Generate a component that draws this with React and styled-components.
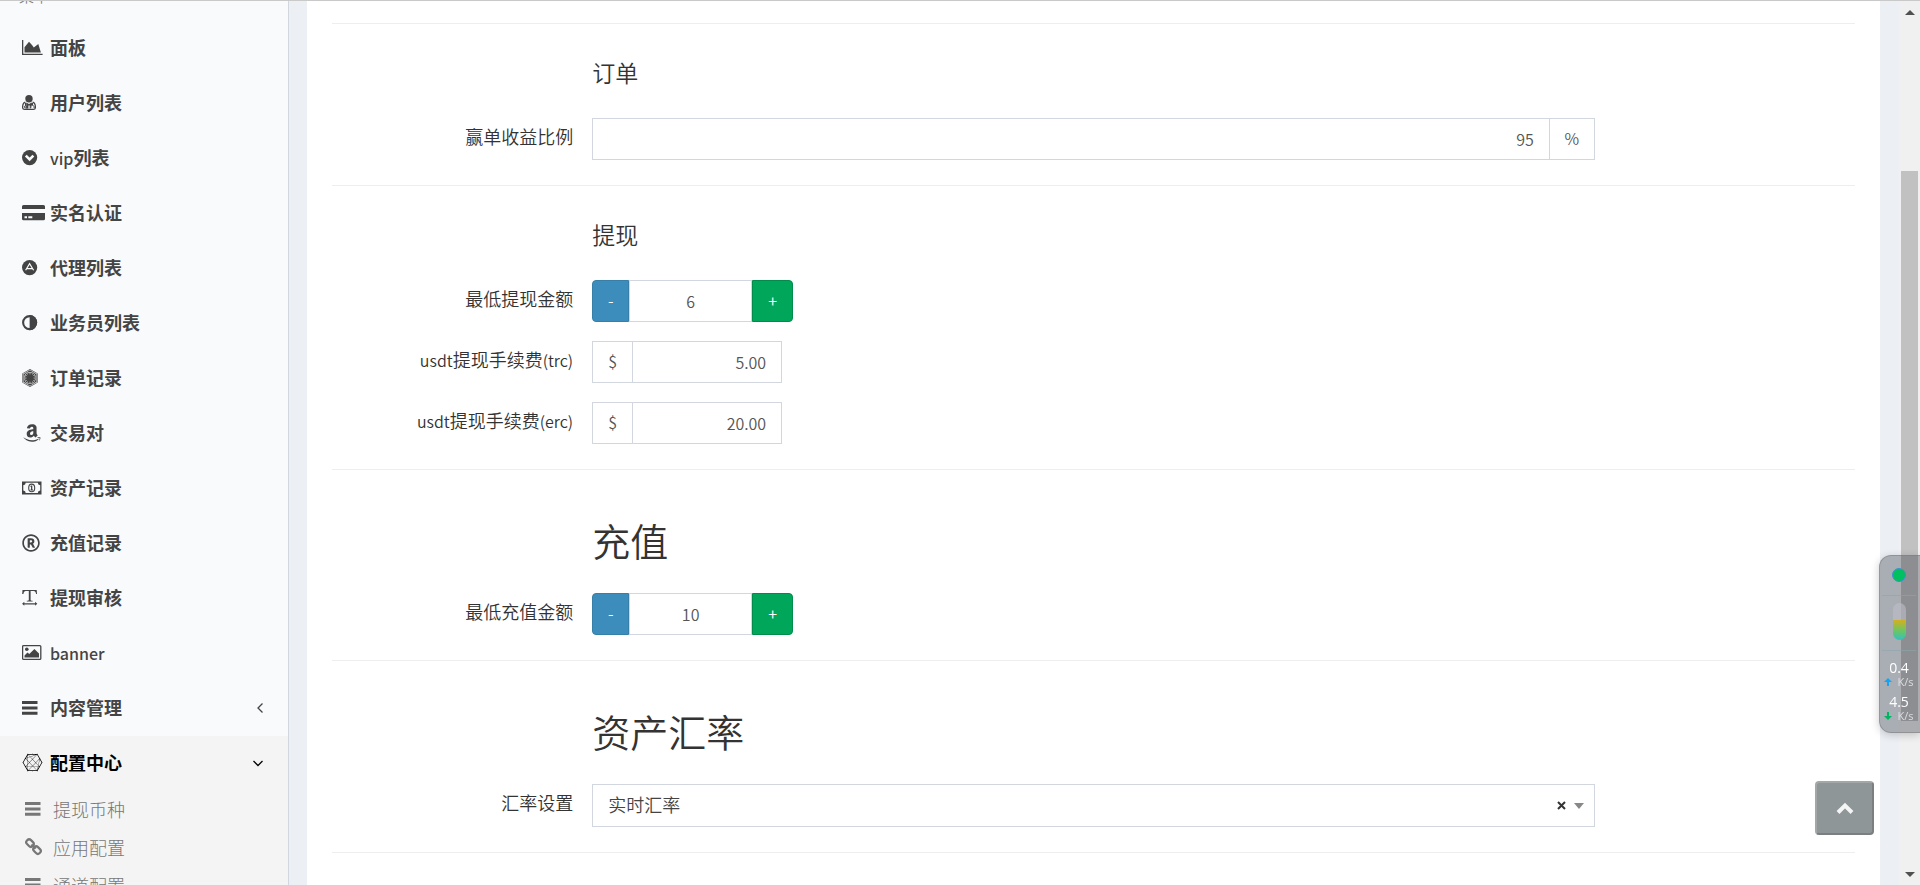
import React, { useState } from "react";
import styled, { createGlobalStyle } from "styled-components";
import {
  FaAmazon,
  FaConnectdevelop,
  FaFirstOrder,
  FaRegRegistered,
} from "react-icons/fa";

const GlobalStyle = createGlobalStyle`
  * {
    box-sizing: border-box;
  }

  body {
    margin: 0;
    color: #333;
    font-family: "Noto Sans CJK SC", sans-serif;
    font-size: 18px;
    font-weight: 350;
    overflow: hidden;
  }

  button,
  input,
  select {
    font-family: inherit;
    font-weight: inherit;
  }
`;

const Page = styled.div`
  display: flex;
  height: 100vh;
  border-top: 1px solid #c9c9c9;
  background-color: #ecf0f5;
`;

const Sidebar = styled.nav`
  flex: 0 0 289px;
  overflow: hidden;
  border-right: 1px solid #d2d6de;
  background-color: #f9fafc;
`;

const SidebarHeader = styled.div`
  height: 42px;
  margin-top: -22px;
  padding: 6px 19px 0;
  color: #848484;
  font-size: 15px;
  line-height: 22px;
`;

const MenuList = styled.ul`
  margin: 0;
  padding: 0;
  list-style: none;
`;

const MenuLink = styled.a`
  display: flex;
  align-items: center;
  height: 55px;
  padding: 0 24px 2px 22px;
  background-color: ${(props) => (props.$active ? "#f4f4f4" : "transparent")};
  color: ${(props) => (props.$active ? "#000" : "#444")};
  font-weight: 600;
  text-decoration: none;
`;

const SubMenu = styled(MenuList)`
  background-color: #f4f4f4;
`;

const SubLink = styled.a`
  display: flex;
  align-items: center;
  height: 38px;
  padding: 0 0 3px 25px;
  color: #777;
  font-weight: 300;
  text-decoration: none;
`;

const IconSlot = styled.span`
  display: flex;
  align-items: center;
  flex: 0 0 28px;

  svg {
    flex: none;
  }
`;

const MenuText = styled.span`
  flex: 1;
  padding-bottom: 2px;
`;

const Latin = styled.span`
  font-size: 16px;
`;

const MenuLatin = styled(Latin)`
  font-weight: 500;
`;

const Content = styled.main`
  flex: 1;
  min-width: 0;
  padding: 0 19px 0 18px;
`;

const Box = styled.form`
  min-height: 100%;
  padding: 22px 6px 0;
  background-color: #fff;
`;

const Divider = styled.hr`
  height: 1px;
  margin: 0 19px;
  border: 0;
  background-color: #eee;
`;

const Section = styled.section`
  display: flex;
  flex-direction: column;
  gap: 19px;
  padding-bottom: 25px;
`;

const Row = styled.div`
  display: grid;
  grid-template-columns: 2fr 8fr 2fr;
`;

const Heading = styled.h4`
  grid-column: 2;
  height: ${(props) => (props.$large ? "104px" : "75px")};
  margin: 0;
  padding: ${(props) => (props.$large ? "45px 19px 0" : "32px 19px 0")};
  font-size: ${(props) => (props.$large ? "38px" : "23px")};
  font-weight: 350;
  line-height: ${(props) => (props.$large ? "50px" : "32px")};
`;

const Label = styled.label`
  padding-top: 6px;
  line-height: 25px;
  text-align: right;
  white-space: nowrap;
`;

const Field = styled.div`
  display: flex;
  padding: 0 19px;
`;

const Group = styled.div`
  display: flex;
  width: ${(props) => props.$width || "100%"};
  height: 42px;
`;

const Input = styled.input`
  flex: 1;
  min-width: 0;
  padding: 0 15px;
  border: 1px solid #d2d6de;
  border-radius: 0;
  outline: none;
  color: #555;
  font-size: 16px;
  text-align: ${(props) => props.$align || "right"};
`;

const Addon = styled.span`
  display: flex;
  align-items: center;
  justify-content: center;
  width: ${(props) => (props.$end ? "45px" : "40px")};
  padding-bottom: 2px;
  border: 1px solid #d2d6de;
  border-${(props) => (props.$end ? "left" : "right")}: 0;
  color: #555;
  font-size: 16px;
`;

const StepButton = styled.button`
  width: ${(props) => (props.$plus ? "41px" : "37px")};
  padding: 0 0 2px;
  border: 1px solid ${(props) => (props.$plus ? "#008d4c" : "#367fa9")};
  border-radius: ${(props) => (props.$plus ? "0 4px 4px 0" : "4px 0 0 4px")};
  background-color: ${(props) => (props.$plus ? "#00a65a" : "#3c8dbc")};
  color: #fff;
  font-size: 16px;
  cursor: pointer;
`;

const SelectBox = styled.div`
  display: flex;
  align-items: center;
  width: 100%;
  height: 43px;
  padding-right: 10px;
  border: 1px solid #d2d6de;
`;

const Select = styled.select`
  flex: 1;
  height: 100%;
  padding: 0 15px 3px;
  border: 0;
  outline: none;
  appearance: none;
  background: transparent;
  color: #444;
  font-size: 18px;
`;

const ClearButton = styled.button`
  display: flex;
  padding: 0;
  border: 0;
  background: none;
  color: #333;
  cursor: pointer;
`;

const Caret = styled.span`
  margin-left: 8px;
  border: 5px solid transparent;
  border-top: 6px solid #888;
  border-bottom: 0;
`;

const Scrollbar = styled.div`
  display: flex;
  flex: 0 0 21px;
  flex-direction: column;
  align-items: center;
  padding: 9px 0 8px;
  background-color: #f0f0f0;
`;

const ScrollArrow = styled.span`
  border: 5px solid transparent;
  border-${(props) => (props.$down ? "top" : "bottom")}-color: #505050;
  border-${(props) => (props.$down ? "bottom" : "top")}: 0;
`;

const ScrollGap = styled.span`
  flex: ${(props) => props.$size};
`;

const ScrollThumb = styled.span`
  flex: 549;
  width: 17px;
  background-color: #c1c1c1;
`;

const TopButton = styled.button`
  position: fixed;
  right: 46px;
  bottom: 50px;
  display: flex;
  align-items: center;
  justify-content: center;
  width: 59px;
  height: 54px;
  border: 2px solid;
  border-color: #a3a7a7 #7c7f7f #7c7f7f #a3a7a7;
  border-radius: 4px;
  background-color: #8f9697;
  cursor: pointer;
`;

const Monitor = styled.aside`
  position: fixed;
  right: 0;
  bottom: 152px;
  display: flex;
  flex-direction: column;
  align-items: center;
  width: 41px;
  height: 178px;
  padding: 12px 2px 0 0;
  border: 1px solid rgba(120, 120, 125, 0.5);
  border-right: 0;
  border-radius: 12px 0 0 12px;
  background-color: rgba(42, 43, 56, 0.34);
  box-shadow: 0 2px 8px rgba(0, 0, 0, 0.2);
  color: #fff;
  font-family: "Open Sans", sans-serif;
  font-weight: 400;
`;

const StatusDot = styled.span`
  width: 14px;
  height: 14px;
  border: 1px solid #3f8fd0;
  border-radius: 50%;
  background-color: #00c060;
`;

const MonitorLine = styled.span`
  width: 34px;
  height: 1px;
  margin: ${(props) => (props.$last ? "10px 0 9px" : "13px 0 7px")};
  background-color: rgba(140, 165, 175, 0.6);
`;

const Gauge = styled.span`
  width: 13px;
  height: 37px;
  border-radius: 7px;
  background: linear-gradient(
    rgba(190, 190, 200, 0.6) 0 17px,
    #d3b020 17px,
    #68c765 28px,
    #38bfc0
  );
`;

const Speed = styled.span`
  height: 34px;
  text-align: center;
`;

const SpeedValue = styled.span`
  display: block;
  font-size: 14px;
  line-height: 16px;
`;

const SpeedUnit = styled.span`
  display: flex;
  align-items: center;
  gap: 5px;
  color: #dcdde0;
  font-size: 11px;
  line-height: 11px;
`;

function Icon({ width, children }) {
  return (
    <svg
      width={width}
      height="18"
      viewBox={`0 0 ${width} 18`}
      fill="currentColor"
      aria-hidden="true"
    >
      {children}
    </svg>
  );
}

const icons = {
  chart: (
    <Icon width={21}>
      <path d="M0 1h1.3v13.7H20.6V16H0zM2.5 13.5V8.2L7 2.8l3.2 3.4 1.6 2.2L16.3 5l2.6 8.5z" />
    </Icon>
  ),
  doctor: (
    <Icon width={14}>
      <circle cx="7" cy="4.7" r="3.7" />
      <path
        d="M3.4 8.2C1.4 8.8.6 10.6.6 13.4c0 1.4.8 2 2 2h8.8c1.2 0 2-.6 2-2 0-2.8-.8-4.6-2.8-5.2"
        fill="none"
        stroke="currentColor"
        strokeWidth="1.3"
      />
      <path d="M4.2 8.6 7 10l2.8-1.4.3 2.3c-1.3.3-1.5 1.2-1.5 3.6H7.7v-3H6.4v3l-2.2.3v-3z" />
      <path
        d="M3.5 9v2.8M10.5 9v2M8.8 14v-1.3a1.7 1.7 0 0 1 3.3 0V14"
        fill="none"
        stroke="currentColor"
        strokeWidth="1"
      />
      <circle cx="3.4" cy="12.9" r="1" fill="none" stroke="currentColor" />
    </Icon>
  ),
  circleDown: (
    <Icon width={16}>
      <circle cx="7.6" cy="8.6" r="7.6" />
      <path d="m3.8 6.7 3.8 3.8 3.8-3.8" fill="none" stroke="#f9fafc" strokeWidth="2.6" />
    </Icon>
  ),
  card: (
    <Icon width={23}>
      <path d="M1.500 1h20A1.500 1.500 0 0 1 23 2.500V5H0V2.500A1.500 1.500 0 0 1 1.500 1z" />
      <path
        fillRule="evenodd"
        d="M0 9h23v5.8a1.500 1.500 0 0 1-1.500 1.500h-20A1.500 1.500 0 0 1 0 14.800zm2.500 3.300v1.900H5v-1.900zm3.800 0v1.900h4v-1.900z"
      />
    </Icon>
  ),
  agent: (
    <Icon width={16}>
      <circle cx="7.6" cy="8.6" r="7.6" />
      <path
        d="M3.6 11.2 7.6 4.6l4 6.6M4.8 9.7h5.6"
        fill="none"
        stroke="#f9fafc"
        strokeWidth="1.2"
      />
    </Icon>
  ),
  adjust: (
    <Icon width={16}>
      <circle cx="7.6" cy="8.6" r="6.5" fill="none" stroke="currentColor" strokeWidth="2.1" />
      <path d="M7.6 1a7.6 7.6 0 0 1 0 15.2z" />
    </Icon>
  ),
  order: <FaFirstOrder style={{ width: 16, height: 18 }} />,
  amazon: <FaAmazon size={20} />,
  money: (
    <Icon width={20}>
      <path
        fillRule="evenodd"
        d="M0 2.4h19.5v13H0zm3.7 1.3A2.5 2.5 0 0 1 1.3 6.2v5.4a2.5 2.5 0 0 1 2.4 2.5h12.1a2.5 2.5 0 0 1 2.4-2.5V6.2a2.5 2.5 0 0 1-2.4-2.5z"
      />
      <ellipse cx="9.7" cy="8.9" rx="3" ry="3.8" fill="none" stroke="currentColor" strokeWidth="1.1" />
      <path d="M9 6.6h1.3v4h.8v.8H8.4v-.8H9V7.8l-.6.3v-.9z" />
    </Icon>
  ),
  registered: <FaRegRegistered size={18} />,
  textWidth: (
    <Icon width={16}>
      <path d="M.5 1h14.2l.3 4h-.9c-.5-2.2-.9-2.9-2.4-2.9H8.6v8.6c0 .8.5 1 2 1.1v.8H4.8v-.8c1.5-.1 2-.3 2-1.1V2.1h-3c-1.5 0-1.9.7-2.4 2.9H.2z" />
      <path d="M2.3 14.2h10.8v-1.4l2.2 2-2.2 2v-1.3H2.3v1.3l-2.2-2 2.2-2z" />
    </Icon>
  ),
  picture: (
    <Icon width={20}>
      <rect x=".6" y="1.6" width="18.2" height="13.8" rx="1" fill="none" stroke="currentColor" strokeWidth="1.3" />
      <circle cx="4.8" cy="5.3" r="1.8" />
      <path d="M2.5 13.5v-2l3-3 1.8 1.6L12.4 5l4.6 4.6v3.9z" />
    </Icon>
  ),
  bars: (
    <Icon width={16}>
      <path d="M0 2h15.500v3H0zM0 7.400h15.500v3H0zM0 12.700h15.500v3H0z" />
    </Icon>
  ),
  mesh: <FaConnectdevelop size={21} />,
  link: (
    <Icon width={17}>
      <g fill="none" stroke="currentColor" strokeWidth="2.2">
        <rect x="1" y="2.3" width="8" height="5.6" rx="2.6" transform="rotate(45 5 5.1)" />
        <rect x="8" y="9.3" width="8" height="5.6" rx="2.6" transform="rotate(45 12 12.1)" />
        <path d="m6.4 6.5 4.2 4.2" />
      </g>
    </Icon>
  ),
};

const menu = [
  { icon: "chart", text: "面板" },
  { icon: "doctor", text: "用户列表" },
  { icon: "circleDown", latin: "vip", text: "列表" },
  { icon: "card", text: "实名认证" },
  { icon: "agent", text: "代理列表" },
  { icon: "adjust", text: "业务员列表" },
  { icon: "order", text: "订单记录" },
  { icon: "amazon", text: "交易对" },
  { icon: "money", text: "资产记录" },
  { icon: "registered", text: "充值记录" },
  { icon: "textWidth", text: "提现审核" },
  { icon: "picture", latin: "banner", text: "" },
  { icon: "bars", text: "内容管理", arrow: "left" },
  { icon: "mesh", text: "配置中心", arrow: "down", active: true },
];

const subMenu = [
  { icon: "bars", text: "提现币种" },
  { icon: "link", text: "应用配置" },
  { icon: "bars", text: "通道配置" },
];

function Angle({ direction }) {
  return (
    <svg width="12" height="12" viewBox="0 0 12 12" fill="none" stroke="currentColor" strokeWidth="1.3">
      <path d={direction === "down" ? "M1.500 4 6 8.500 10.500 4" : "M10.500 1.500 6 6l4.500 4.500"} />
    </svg>
  );
}

function FormRow({ id, latin, label, suffix, children }) {
  return (
    <Row>
      <Label htmlFor={id}>
        {latin && <Latin>{latin}</Latin>}
        {label}
        {suffix && <Latin>{suffix}</Latin>}
      </Label>
      <Field>{children}</Field>
    </Row>
  );
}

function SectionHeading({ large, children }) {
  return (
    <Row>
      <Heading as={large ? "h2" : "h4"} $large={large}>
        {children}
      </Heading>
    </Row>
  );
}

function NumberStepper({ id, initial }) {
  const [value, setValue] = useState(initial);

  return (
    <Group $width="201px">
      <StepButton type="button" onClick={() => setValue(Number(value) - 1)}>
        -
      </StepButton>
      <Input
        id={id}
        type="text"
        $align="center"
        value={value}
        onChange={(e) => setValue(e.target.value)}
      />
      <StepButton type="button" $plus onClick={() => setValue(Number(value) + 1)}>
        +
      </StepButton>
    </Group>
  );
}

function SpeedRow({ value, color, down }) {
  return (
    <Speed>
      <SpeedValue>{value}</SpeedValue>
      <SpeedUnit>
        <svg width="8" height="10" viewBox="0 0 8 10" fill={color}>
          <path d={down ? "M3 1h2v4h3L4 9 0 5h3z" : "M3 9h2V5h3L4 1 0 5h3z"} />
        </svg>
        K/s
      </SpeedUnit>
    </Speed>
  );
}

function App() {
  const [rate, setRate] = useState("realtime");

  return (
    <>
      <GlobalStyle />
      <Page>
        <Sidebar>
          <SidebarHeader>菜单</SidebarHeader>
          <MenuList>
            {menu.map((item) => (
              <li key={item.icon}>
                <MenuLink href="#" $active={item.active}>
                  <IconSlot>{icons[item.icon]}</IconSlot>
                  <MenuText>
                    {item.latin && <MenuLatin>{item.latin}</MenuLatin>}
                    {item.text}
                  </MenuText>
                  {item.arrow && <Angle direction={item.arrow} />}
                </MenuLink>
              </li>
            ))}
          </MenuList>
          <SubMenu>
            {subMenu.map((item) => (
              <li key={item.text}>
                <SubLink href="#">
                  <IconSlot>{icons[item.icon]}</IconSlot>
                  {item.text}
                </SubLink>
              </li>
            ))}
          </SubMenu>
        </Sidebar>

        <Content>
          <Box>
            <Divider />
            <Section>
              <SectionHeading>订单</SectionHeading>
              <FormRow id="profit" label="赢单收益比例">
                <Group>
                  <Input id="profit" type="text" defaultValue="95" />
                  <Addon $end>%</Addon>
                </Group>
              </FormRow>
            </Section>
            <Divider />
            <Section>
              <SectionHeading>提现</SectionHeading>
              <FormRow id="min-withdraw" label="最低提现金额">
                <NumberStepper id="min-withdraw" initial="6" />
              </FormRow>
              <FormRow id="fee-trc" latin="usdt" label="提现手续费" suffix="(trc)">
                <Group $width="190px">
                  <Addon>$</Addon>
                  <Input id="fee-trc" type="text" defaultValue="5.00" />
                </Group>
              </FormRow>
              <FormRow id="fee-erc" latin="usdt" label="提现手续费" suffix="(erc)">
                <Group $width="190px">
                  <Addon>$</Addon>
                  <Input id="fee-erc" type="text" defaultValue="20.00" />
                </Group>
              </FormRow>
            </Section>
            <Divider />
            <Section>
              <SectionHeading large>充值</SectionHeading>
              <FormRow id="min-recharge" label="最低充值金额">
                <NumberStepper id="min-recharge" initial="10" />
              </FormRow>
            </Section>
            <Divider />
            <Section>
              <SectionHeading large>资产汇率</SectionHeading>
              <FormRow id="rate" label="汇率设置">
                <SelectBox>
                  <Select id="rate" value={rate} onChange={(e) => setRate(e.target.value)}>
                    <option value="" />
                    <option value="realtime">实时汇率</option>
                  </Select>
                  <ClearButton type="button" aria-label="清除" onClick={() => setRate("")}>
                    <svg width="9" height="9" viewBox="0 0 9 9" stroke="currentColor" strokeWidth="2">
                      <path d="m1 1 7 7M8 1 1 8" />
                    </svg>
                  </ClearButton>
                  <Caret />
                </SelectBox>
              </FormRow>
            </Section>
            <Divider />
          </Box>
        </Content>

        <Scrollbar>
          <ScrollArrow />
          <ScrollGap $size={156} />
          <ScrollThumb />
          <ScrollGap $size={151} />
          <ScrollArrow $down />
        </Scrollbar>
      </Page>

      <TopButton type="button" aria-label="返回顶部">
        <svg width="18" height="12" viewBox="0 0 18 12" fill="none" stroke="#f4f5f5" strokeWidth="4">
          <path d="m2 10.500 7-7 7 7" />
        </svg>
      </TopButton>

      <Monitor>
        <StatusDot />
        <MonitorLine />
        <Gauge />
        <MonitorLine $last />
        <SpeedRow value="0.4" color="#12a5f5" />
        <SpeedRow value="4.5" color="#00b562" down />
      </Monitor>
    </>
  );
}

export default App;
